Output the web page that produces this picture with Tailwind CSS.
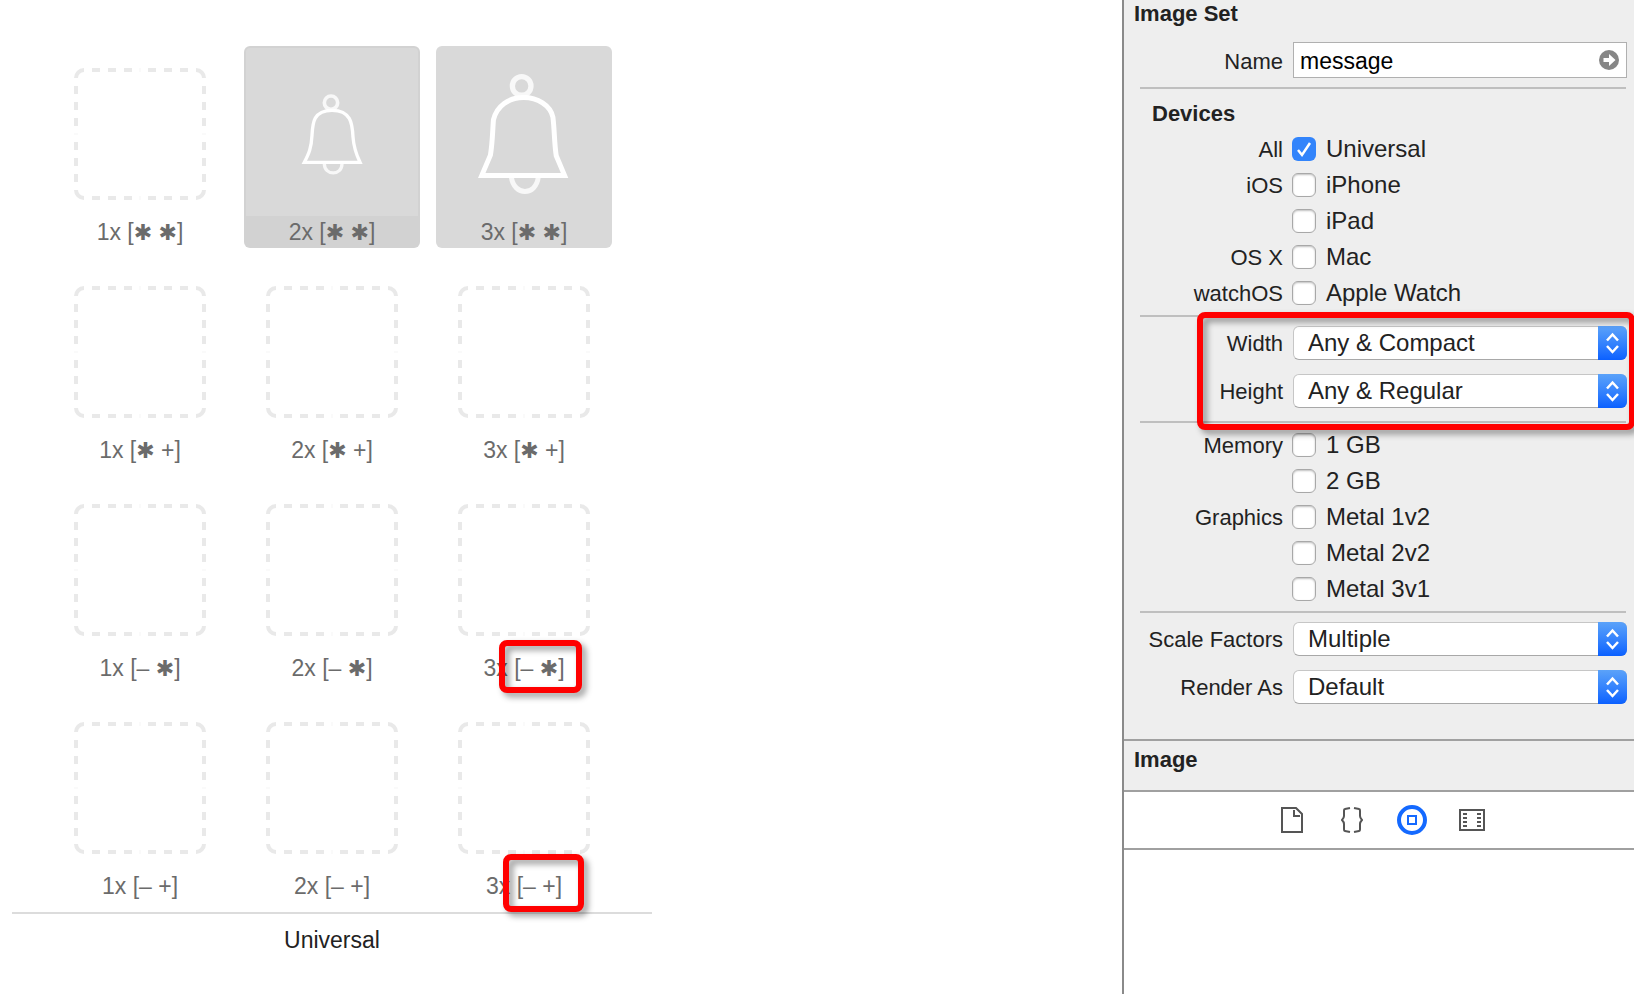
<!DOCTYPE html>
<html lang="en">
<head>
<meta charset="utf-8">
<title>Image Set</title>
<script src="https://cdn.jsdelivr.net/npm/@tailwindcss/browser@4"></script>
</head>
<body class="bg-white">
<svg class="hidden" aria-hidden="true">
  <symbol id="slot" viewBox="0 0 132 132">
    <g fill="none" stroke="#e9e9e9" stroke-width="4">
      <path d="M2 10A8 8 0 0 1 10 2M122 2A8 8 0 0 1 130 10M130 122A8 8 0 0 1 122 130M10 130A8 8 0 0 1 2 122"/>
      <path d="M18 2h8m8 0h8m8 0h8m16 0h8m8 0h8m8 0h8M18 130h8m8 0h8m8 0h8m16 0h8m8 0h8m8 0h8"/>
      <path d="M2 18v8m0 8v8m0 8v8m0 16v8m0 8v8m0 8v8M130 18v8m0 8v8m0 8v8m0 16v8m0 8v8m0 8v8"/>
      <path stroke="#fafafa" d="M65 2h2M65 130h2M2 65v2M130 65v2"/>
    </g>
  </symbol>
  <symbol id="arrows" viewBox="0 0 29 34">
    <path d="M9 14.500L14.500 8.500L20 14.500M9 20L14.500 26L20 20" fill="none" stroke="#fff" stroke-width="2.500"/>
  </symbol>
</svg>

<div class="flex min-h-screen overflow-hidden font-['Liberation_Sans',Arial,sans-serif] text-2xl text-[#222]">
  <main class="min-w-0 flex-1 pt-[46px] pl-3 text-[23px]">
    <section class="w-[640px]">
      <div class="grid grid-cols-[repeat(3,176px)] justify-center gap-4 text-[#6b6b6b]">
        <figure class="flex h-[202px] flex-col items-center pt-[22px]">
          <svg class="size-[132px]"><use href="#slot"/></svg>
          <figcaption class="mt-4 leading-8">1x [<span class="font-['DejaVu_Sans'] text-[22px] leading-none">✱</span> <span class="font-['DejaVu_Sans'] text-[22px] leading-none">✱</span>]</figcaption>
        </figure>
        <figure class="flex h-[202px] flex-col rounded-md bg-[#d2d2d2] text-center">
          <div class="mx-0.5 mt-0.5 flex h-[168px] items-center justify-center rounded-t bg-[#d9d9d9] pt-1">
            <svg class="h-[82px] w-[62px]" viewBox="753 158 186 246" fill="none" stroke="#fff">
              <circle cx="843" cy="187" r="20" stroke-width="11" opacity=".8"/>
              <path d="M823 370C823 407 876 407 876 370" stroke-width="10" opacity=".8"/>
              <path d="M763 366H930C919 343 911 319 909 290C907 250 903 210 846 210C789 210 788 250 786 285C784 323 777 339 763 366Z" stroke-width="10"/>
            </svg>
          </div>
          <figcaption class="leading-8">2x [<span class="font-['DejaVu_Sans'] text-[22px] leading-none">✱</span> <span class="font-['DejaVu_Sans'] text-[22px] leading-none">✱</span>]</figcaption>
        </figure>
        <figure class="flex h-[202px] flex-col rounded-md bg-[#d9d9d9] text-center">
          <div class="flex h-[170px] items-center justify-center pt-1.5">
            <svg class="h-[121px] w-[92px]" viewBox="173 130 276 364" fill="none" stroke="#fff">
              <circle cx="304" cy="166" r="28" stroke-width="16" opacity=".8"/>
              <path d="M273 440C281 498 347 498 354 440" stroke-width="15" opacity=".8"/>
              <path d="M184 435H433L408 376C402 340 403 300 398 260C390 224 352 201 310 201C265 201 229 226 219 268C216 310 216 338 210 374Z" stroke-width="15"/>
            </svg>
          </div>
          <figcaption class="leading-8">3x [<span class="font-['DejaVu_Sans'] text-[22px] leading-none">✱</span> <span class="font-['DejaVu_Sans'] text-[22px] leading-none">✱</span>]</figcaption>
        </figure>

        <figure class="flex h-[202px] flex-col items-center pt-[22px]">
          <svg class="size-[132px]"><use href="#slot"/></svg>
          <figcaption class="mt-4 leading-8">1x [<span class="font-['DejaVu_Sans'] text-[22px] leading-none">✱</span> +]</figcaption>
        </figure>
        <figure class="flex h-[202px] flex-col items-center pt-[22px]">
          <svg class="size-[132px]"><use href="#slot"/></svg>
          <figcaption class="mt-4 leading-8">2x [<span class="font-['DejaVu_Sans'] text-[22px] leading-none">✱</span> +]</figcaption>
        </figure>
        <figure class="flex h-[202px] flex-col items-center pt-[22px]">
          <svg class="size-[132px]"><use href="#slot"/></svg>
          <figcaption class="mt-4 leading-8">3x [<span class="font-['DejaVu_Sans'] text-[22px] leading-none">✱</span> +]</figcaption>
        </figure>

        <figure class="flex h-[202px] flex-col items-center pt-[22px]">
          <svg class="size-[132px]"><use href="#slot"/></svg>
          <figcaption class="mt-4 leading-8">1x [– <span class="font-['DejaVu_Sans'] text-[22px] leading-none">✱</span>]</figcaption>
        </figure>
        <figure class="flex h-[202px] flex-col items-center pt-[22px]">
          <svg class="size-[132px]"><use href="#slot"/></svg>
          <figcaption class="mt-4 leading-8">2x [– <span class="font-['DejaVu_Sans'] text-[22px] leading-none">✱</span>]</figcaption>
        </figure>
        <figure class="relative flex h-[202px] flex-col items-center pt-[22px]">
          <svg class="size-[132px]"><use href="#slot"/></svg>
          <figcaption class="mt-4 leading-8">3x [– <span class="font-['DejaVu_Sans'] text-[22px] leading-none">✱</span>]</figcaption>
          <div class="absolute top-[158px] left-[63px] h-[53px] w-[83px] rounded-lg border-6 border-[#f00] drop-shadow-[4px_4px_3px_rgba(0,0,0,0.4)]"></div>
        </figure>

        <figure class="flex h-[202px] flex-col items-center pt-[22px]">
          <svg class="size-[132px]"><use href="#slot"/></svg>
          <figcaption class="mt-4 leading-8">1x [– +]</figcaption>
        </figure>
        <figure class="flex h-[202px] flex-col items-center pt-[22px]">
          <svg class="size-[132px]"><use href="#slot"/></svg>
          <figcaption class="mt-4 leading-8">2x [– +]</figcaption>
        </figure>
        <figure class="relative flex h-[202px] flex-col items-center pt-[22px]">
          <svg class="size-[132px]"><use href="#slot"/></svg>
          <figcaption class="mt-4 leading-8">3x [– +]</figcaption>
          <div class="absolute top-[154px] left-[67px] z-10 h-[58px] w-[81px] rounded-lg border-6 border-[#f00] drop-shadow-[4px_4px_3px_rgba(0,0,0,0.4)]"></div>
        </figure>
      </div>
      <h2 class="mt-2.5 border-t-2 border-[#dcdcdc] pt-2.5 text-center leading-8">Universal</h2>
    </section>
  </main>

  <aside class="w-[512px] shrink-0 border-l-2 border-[#8a8a8a]">
    <form class="border-b-2 border-[#a0a0a0] bg-[#eee] pr-[7px] pb-[35px] pl-4">
      <h2 class="-ml-1.5 text-[22px] leading-7 font-bold">Image Set</h2>
      <div class="mt-3.5 flex items-center gap-2.5">
        <label for="name" class="w-[143px] pt-1 text-right text-[22px]">Name</label>
        <div class="relative min-w-0 flex-1">
          <input id="name" type="text" value="message" class="block h-9 w-full border border-[#b0b0b0] bg-white pt-0.5 pr-10 pl-1.5 text-[23px] text-black">
          <button type="button" aria-label="Show in project" class="absolute top-2 right-2 size-5">
            <svg class="size-5" viewBox="0 0 20 20"><circle cx="10" cy="10" r="10" fill="#868686"/><path d="M4.500 8H10V4L16.500 10L10 16V12H4.500Z" fill="#fff"/></svg>
          </button>
        </div>
      </div>
      <hr class="mt-[9px] mr-px border-t-2 border-[#bfbfbf]">

      <h3 class="mt-[11px] ml-3 text-[22px] leading-7 font-bold">Devices</h3>
      <div class="mt-[3px]">
        <div class="flex h-9 items-center gap-[9px]">
          <span class="w-[143px] pt-0.5 text-right text-[22px]">All</span>
          <label class="relative flex items-center gap-2.5"><input type="checkbox" checked class="size-6 appearance-none rounded-md bg-[#3284fb]">Universal
            <svg class="pointer-events-none absolute left-0 size-6" viewBox="0 0 24 24"><path d="M6 13L10 18L18 6" fill="none" stroke="#fff" stroke-width="2.500"/></svg>
          </label>
        </div>
        <div class="flex h-9 items-center gap-[9px]">
          <span class="w-[143px] pt-0.5 text-right text-[22px]">iOS</span>
          <label class="flex items-center gap-2.5"><input type="checkbox" class="size-6 appearance-none rounded-md border border-[#a8a8a8] bg-white shadow-[inset_0_1px_2px_rgba(0,0,0,0.25)]">iPhone</label>
        </div>
        <div class="flex h-9 items-center gap-[9px]">
          <span class="w-[143px]"></span>
          <label class="flex items-center gap-2.5"><input type="checkbox" class="size-6 appearance-none rounded-md border border-[#a8a8a8] bg-white shadow-[inset_0_1px_2px_rgba(0,0,0,0.25)]">iPad</label>
        </div>
        <div class="flex h-9 items-center gap-[9px]">
          <span class="w-[143px] pt-0.5 text-right text-[22px]">OS X</span>
          <label class="flex items-center gap-2.5"><input type="checkbox" class="size-6 appearance-none rounded-md border border-[#a8a8a8] bg-white shadow-[inset_0_1px_2px_rgba(0,0,0,0.25)]">Mac</label>
        </div>
        <div class="flex h-9 items-center gap-[9px]">
          <span class="w-[143px] pt-0.5 text-right text-[22px]">watchOS</span>
          <label class="flex items-center gap-2.5"><input type="checkbox" class="size-6 appearance-none rounded-md border border-[#a8a8a8] bg-white shadow-[inset_0_1px_2px_rgba(0,0,0,0.25)]">Apple Watch</label>
        </div>
      </div>
      <hr class="mt-1 mr-px border-t-2 border-[#bfbfbf]">

      <div class="relative mt-[9px] flex flex-col gap-3.5">
        <div class="flex h-[34px] items-center gap-2.5">
          <label for="width" class="w-[143px] pt-0.5 text-right text-[22px]">Width</label>
          <div class="relative min-w-0 flex-1">
            <select id="width" class="block h-[34px] w-full appearance-none rounded-md border border-[#c6c6c6] border-b-[#a8a8a8] bg-white pl-3.5"><option>Any &amp; Compact</option></select>
            <svg class="pointer-events-none absolute top-0 right-0 h-[34px] w-[29px] rounded-r-md bg-linear-to-b from-[#5ba2f9] to-[#0a60ff]"><use href="#arrows"/></svg>
          </div>
        </div>
        <div class="flex h-[34px] items-center gap-2.5">
          <label for="height" class="w-[143px] pt-0.5 text-right text-[22px]">Height</label>
          <div class="relative min-w-0 flex-1">
            <select id="height" class="block h-[34px] w-full appearance-none rounded-md border border-[#c6c6c6] border-b-[#a8a8a8] bg-white pl-3.5"><option>Any &amp; Regular</option></select>
            <svg class="pointer-events-none absolute top-0 right-0 h-[34px] w-[29px] rounded-r-md bg-linear-to-b from-[#5ba2f9] to-[#0a60ff]"><use href="#arrows"/></svg>
          </div>
        </div>
        <div class="pointer-events-none absolute -top-3.5 -right-2 left-[57px] h-[118px] rounded-lg border-6 border-[#f00] drop-shadow-[4px_4px_3px_rgba(0,0,0,0.4)]"></div>
      </div>
      <hr class="mt-[13px] mr-px border-t-2 border-[#bfbfbf]">

      <div class="mt-1">
        <div class="flex h-9 items-center gap-[9px]">
          <span class="w-[143px] pt-0.5 text-right text-[22px]">Memory</span>
          <label class="flex items-center gap-2.5"><input type="checkbox" class="size-6 appearance-none rounded-md border border-[#a8a8a8] bg-white shadow-[inset_0_1px_2px_rgba(0,0,0,0.25)]">1 GB</label>
        </div>
        <div class="flex h-9 items-center gap-[9px]">
          <span class="w-[143px]"></span>
          <label class="flex items-center gap-2.5"><input type="checkbox" class="size-6 appearance-none rounded-md border border-[#a8a8a8] bg-white shadow-[inset_0_1px_2px_rgba(0,0,0,0.25)]">2 GB</label>
        </div>
        <div class="flex h-9 items-center gap-[9px]">
          <span class="w-[143px] pt-0.5 text-right text-[22px]">Graphics</span>
          <label class="flex items-center gap-2.5"><input type="checkbox" class="size-6 appearance-none rounded-md border border-[#a8a8a8] bg-white shadow-[inset_0_1px_2px_rgba(0,0,0,0.25)]">Metal 1v2</label>
        </div>
        <div class="flex h-9 items-center gap-[9px]">
          <span class="w-[143px]"></span>
          <label class="flex items-center gap-2.5"><input type="checkbox" class="size-6 appearance-none rounded-md border border-[#a8a8a8] bg-white shadow-[inset_0_1px_2px_rgba(0,0,0,0.25)]">Metal 2v2</label>
        </div>
        <div class="flex h-9 items-center gap-[9px]">
          <span class="w-[143px]"></span>
          <label class="flex items-center gap-2.5"><input type="checkbox" class="size-6 appearance-none rounded-md border border-[#a8a8a8] bg-white shadow-[inset_0_1px_2px_rgba(0,0,0,0.25)]">Metal 3v1</label>
        </div>
      </div>
      <hr class="mt-1 mr-px border-t-2 border-[#bfbfbf]">

      <div class="mt-[9px] flex flex-col gap-3.5">
        <div class="flex h-[34px] items-center gap-2.5">
          <label for="scale" class="w-[143px] pt-0.5 text-right text-[22px]">Scale Factors</label>
          <div class="relative min-w-0 flex-1">
            <select id="scale" class="block h-[34px] w-full appearance-none rounded-md border border-[#c6c6c6] border-b-[#a8a8a8] bg-white pl-3.5"><option>Multiple</option></select>
            <svg class="pointer-events-none absolute top-0 right-0 h-[34px] w-[29px] rounded-r-md bg-linear-to-b from-[#5ba2f9] to-[#0a60ff]"><use href="#arrows"/></svg>
          </div>
        </div>
        <div class="flex h-[34px] items-center gap-2.5">
          <label for="render" class="w-[143px] pt-0.5 text-right text-[22px]">Render As</label>
          <div class="relative min-w-0 flex-1">
            <select id="render" class="block h-[34px] w-full appearance-none rounded-md border border-[#c6c6c6] border-b-[#a8a8a8] bg-white pl-3.5"><option>Default</option></select>
            <svg class="pointer-events-none absolute top-0 right-0 h-[34px] w-[29px] rounded-r-md bg-linear-to-b from-[#5ba2f9] to-[#0a60ff]"><use href="#arrows"/></svg>
          </div>
        </div>
      </div>
    </form>

    <h2 class="border-b-2 border-[#a0a0a0] bg-[#eee] pt-[5px] pb-4 pl-2.5 text-[22px] leading-7 font-bold">Image</h2>

    <nav class="flex h-[58px] items-center justify-center border-b-2 border-[#a0a0a0] pl-1.5 text-[#555]">
      <button type="button" aria-label="File templates" class="flex w-[60px] justify-center">
        <svg class="h-[26px] w-[22px]" viewBox="0 0 22 26" fill="none" stroke="currentColor" stroke-width="2"><path d="M1 1H15L21 7V25H1ZM13 3V9H19"/></svg>
      </button>
      <button type="button" aria-label="Code snippets" class="flex w-[60px] justify-center">
        <svg class="h-[26px] w-[22px]" viewBox="0 0 22 26" fill="none" stroke="currentColor" stroke-width="2"><path d="M9 1L4 2Q3 2 3 4V9Q3 11 1 13Q3 15 3 17V22Q3 24 4 24L9 25M13 1L18 2Q19 2 19 4V9Q19 11 21 13Q19 15 19 17V22Q19 24 18 24L13 25"/></svg>
      </button>
      <button type="button" aria-label="Objects" class="flex w-[60px] justify-center text-[#1469ff]">
        <svg class="size-[30px]" viewBox="0 0 30 30" fill="none" stroke="currentColor"><circle cx="15" cy="15" r="13" stroke-width="4"/><path d="M11 11H19V19H11Z" stroke-width="2"/></svg>
      </button>
      <button type="button" aria-label="Media" class="flex w-[60px] justify-center">
        <svg class="h-[22px] w-[26px]" viewBox="0 0 26 22" fill="none" stroke="currentColor" stroke-width="2"><path d="M1 1H25V21H1ZM4 5H8M4 9H8M4 13H8M4 17H8M18 5H22M18 9H22M18 13H22M18 17H22"/></svg>
      </button>
    </nav>
  </aside>
</div>
</body>
</html>
